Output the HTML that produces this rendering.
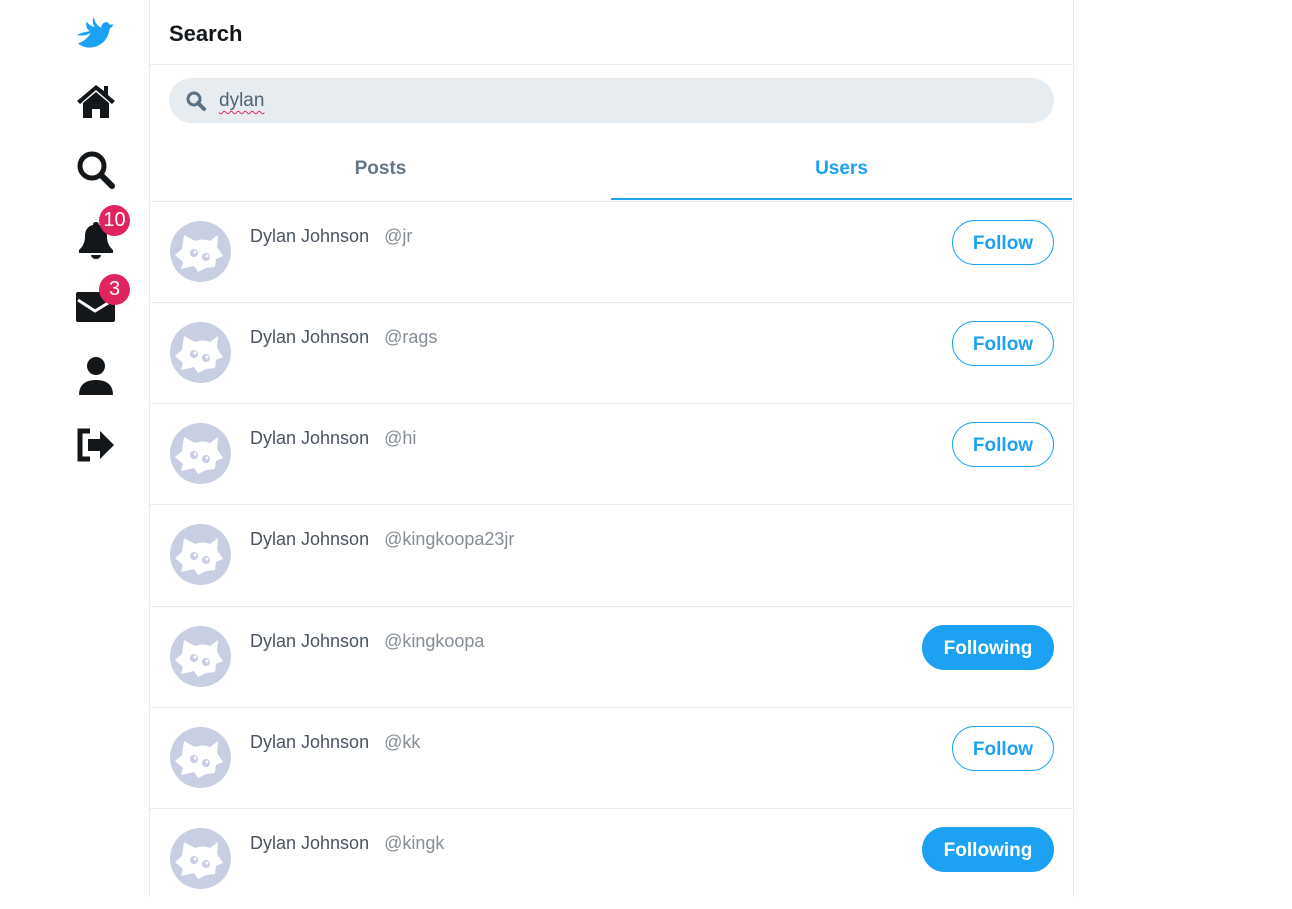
<!DOCTYPE html>
<html><head><style>
body{margin:0;width:1292px;height:897px;background:#fff;font-family:"Liberation Sans",sans-serif;overflow:hidden;position:relative}
.side{position:absolute;left:0;top:0;width:149px}
.ic{position:absolute;left:76px}
.badge{position:absolute;background:#e0245e;color:#fff;border-radius:50%;width:31px;height:31px;font-size:20px;text-align:center;line-height:31px}
.main{position:absolute;left:149px;top:0;width:923px;height:897px;border-left:1px solid #e6ecf0;border-right:1px solid #e6ecf0}
.hdr{height:64px;border-bottom:1px solid #e6ecf0;font-weight:bold;font-size:22px;line-height:67px;padding-left:19px;color:#14171a}
.sb{position:absolute;left:19px;top:78px;width:885px;height:45px;border-radius:23px;background:#e6ecf0}
.sb span{position:absolute;left:50px;top:12px;font-size:19px;color:#4f6373;text-decoration:underline wavy #e0245e;text-decoration-thickness:1px;text-underline-offset:4px}
.tab{position:absolute;top:142px;width:461px;height:57px;text-align:center;font-weight:bold;font-size:19px;line-height:54px;color:#657786}
.row{position:absolute;left:0;width:923px;height:100px;border-top:1px solid #e6ecf0}
.av{position:absolute;left:20px;top:19px;width:61px;height:61px;border-radius:50%;background:#c8cfe3;overflow:hidden}
.nm{position:absolute;left:100px;top:24px;font-size:18px;color:#4a5562}
.nm b{font-weight:normal;color:#858d96;margin-left:10px}
.btn{position:absolute;right:19px;top:18px;height:43px;border:1px solid #1da1f2;border-radius:23px;color:#1da1f2;font-weight:bold;font-size:19px;line-height:45px;text-align:center;width:100px}
.btn.f{background:#1da1f2;color:#fff;width:130px}
</style></head><body>
<div class="side">
<svg class="ic" style="left:76px;top:12px" width="40" height="40" viewBox="0 0 38 38"><path d="M1 22c6 1 9 0 13-2-3 5-7 8-12 10 4 3 10 5 16 3 8-2 13-9 14-17l4-4-4 0c-1-2-3-3-5-2-2 1-3 3-3 5-4-2-6-5-7-10-2 3-1 7 1 9-3 0-6-2-8-5-1 4 0 7 3 9-3 1-8 1-12 4z" fill="#1da1f2"/></svg>
<svg class="ic" style="left:75px;top:83px" width="42" height="36" viewBox="0 0 42 36"><path d="M21 2L2 18l3 3 16-14 16 14 3-3-7-6V3h-4v5z" fill="#14171a"/><path d="M8 20l13-11 13 11v15h-9v-9h-8v9H8z" fill="#14171a"/></svg>
<svg class="ic" style="left:76px;top:150px" width="40" height="40" viewBox="0 0 40 40"><circle cx="16" cy="16" r="12" fill="none" stroke="#14171a" stroke-width="5"/><path d="M25 25l11 11" stroke="#14171a" stroke-width="6" stroke-linecap="round"/></svg>
<svg class="ic" style="left:78px;top:220px" width="36" height="40" viewBox="0 0 36 40"><path d="M18 2c-2 0-3 1-3 3-5 1-8 5-8 11 0 8-3 11-6 14v3h34v-3c-3-3-6-6-6-14 0-6-3-10-8-11 0-2-1-3-3-3z" fill="#14171a"/><path d="M13 35h10a5 4 0 0 1-10 0z" fill="#14171a"/></svg>
<div class="badge" style="left:99px;top:205px">10</div>
<svg class="ic" style="left:76px;top:292px" width="40" height="32" viewBox="0 0 40 32"><rect x="0" y="0" width="39" height="30" rx="2" fill="#14171a"/><path d="M2 8l17 11 18-11" fill="none" stroke="#fff" stroke-width="3"/></svg>
<div class="badge" style="left:99px;top:274px">3</div>
<svg class="ic" style="left:78px;top:356px" width="36" height="40" viewBox="0 0 36 40"><circle cx="18" cy="10" r="9" fill="#14171a"/><path d="M1 39c0-10 6-15 17-15s17 5 17 15z" fill="#14171a"/></svg>
<svg class="ic" style="left:76px;top:428px" width="40" height="34" viewBox="0 0 40 34"><path d="M14 3H4v28h10" fill="none" stroke="#14171a" stroke-width="5"/><path d="M12 11h12V3l14 14-14 14v-8H12z" fill="#14171a"/></svg>
</div>
<div class="main">
<div class="hdr">Search</div>
<div class="sb"><svg style="position:absolute;left:16px;top:12px" width="22" height="22" viewBox="0 0 22 22"><circle cx="9" cy="9" r="6" fill="none" stroke="#5b7083" stroke-width="3"/><path d="M13 13l6 6" stroke="#5b7083" stroke-width="4" stroke-linecap="round"/></svg><span>dylan</span></div>
<div class="tab" style="left:0">Posts</div>
<div class="tab" style="left:461px;color:#1da1f2;border-bottom:2px solid #1da1f2;height:56px">Users</div>
<div id="rows"></div>
</div>
<script>
var d=[["jr",0],["rags",0],["hi",0],["kingkoopa23jr",2],["kingkoopa",1],["kk",0],["kingk",1]];
var tops=[201,302,403,504,606,707,808],h="";
var av='<svg width="61" height="61" viewBox="0 0 61 61"><path d="M14 14l11 6c5-2 10-2 15 0l8-6-1 12 6 9-7 3-1 8-9 1-8 4-4-6-13 3 2-7-8-7 7-6z" fill="#fff"/><circle cx="24" cy="32" r="4" fill="#c8cfe3"/><circle cx="36" cy="36" r="4" fill="#c8cfe3"/><circle cx="25" cy="31" r="1.5" fill="#fff"/><circle cx="37" cy="35" r="1.5" fill="#fff"/></svg>';
d.forEach(function(r,i){h+='<div class="row" style="top:'+tops[i]+'px"><div class="av">'+av+'</div><div class="nm">Dylan Johnson <b>@'+r[0]+'</b></div>'+(r[1]==0?'<div class="btn">Follow</div>':r[1]==1?'<div class="btn f">Following</div>':'')+'</div>';});
document.getElementById("rows").innerHTML=h;
</script>
</body></html>
